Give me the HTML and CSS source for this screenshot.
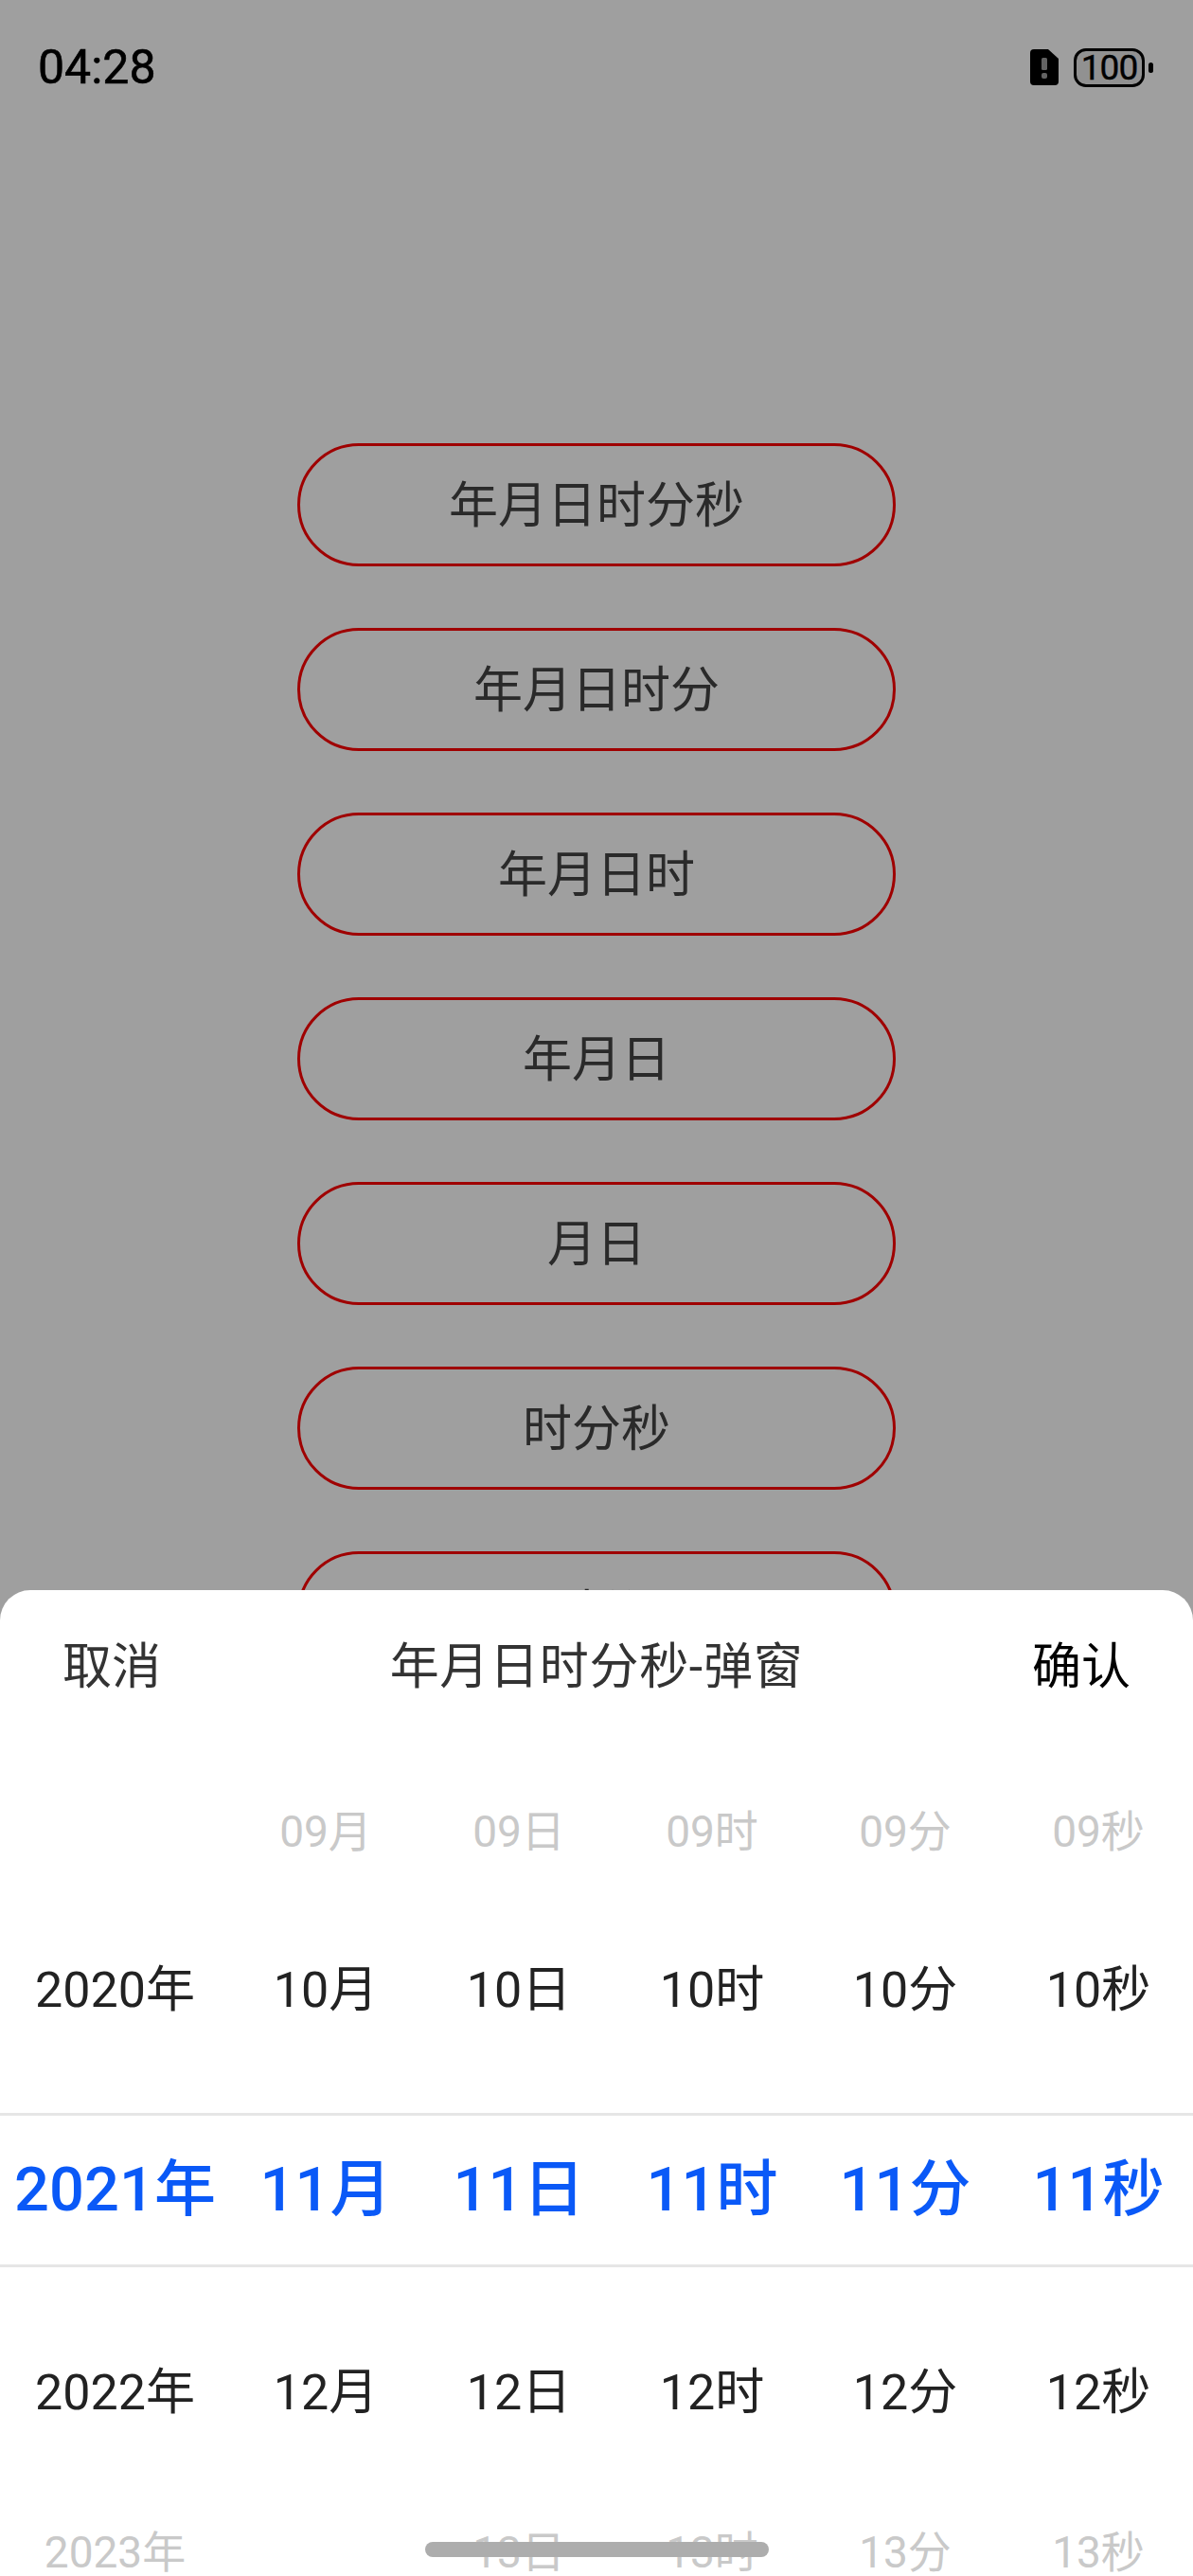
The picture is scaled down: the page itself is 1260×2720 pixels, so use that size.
FILE: index.html
```html
<!DOCTYPE html>
<html lang="zh-CN">
<head>
  <meta charset="UTF-8">
  <title>日期选择弹窗</title>
  <link rel="stylesheet" href="styles.css">
</head>
<body>

  <div class="page">
    <div class="status">
      <span class="time">04:28</span>
      <div class="status-icons">
        <svg class="sim" viewBox="0 0 30 38">
          <path d="M4 0H19L30 10V34A4 4 0 0 1 26 38H4A4 4 0 0 1 0 34V4A4 4 0 0 1 4 0Z" fill="#000"/>
          <rect x="12" y="9" width="6" height="13" rx="1.5" fill="#9f9f9f"/>
          <rect x="12" y="25" width="6" height="6" rx="2" fill="#9f9f9f"/>
        </svg>
        <div class="battery"><span>100</span></div>
        <div class="battery-tip"></div>
      </div>
    </div>

    <div class="btn-list">
      <button class="btn">年月日时分秒</button>
      <button class="btn">年月日时分</button>
      <button class="btn">年月日时</button>
      <button class="btn">年月日</button>
      <button class="btn">月日</button>
      <button class="btn">时分秒</button>
      <button class="btn">时分</button>
    </div>
  </div>

  <div class="mask"></div>

  <div class="sheet">
    <div class="sheet-head">
      <span class="cancel">取消</span>
      <span class="title">年月日时分秒-弹窗</span>
      <span class="confirm">确认</span>
    </div>

    <div class="wheel">
      <div class="row far">
        <span></span><span>09月</span><span>09日</span><span>09时</span><span>09分</span><span>09秒</span>
      </div>
      <div class="row near">
        <span>2020年</span><span>10月</span><span>10日</span><span>10时</span><span>10分</span><span>10秒</span>
      </div>
      <div class="row active">
        <span>2021年</span><span>11月</span><span>11日</span><span>11时</span><span>11分</span><span>11秒</span>
      </div>
      <div class="row near">
        <span>2022年</span><span>12月</span><span>12日</span><span>12时</span><span>12分</span><span>12秒</span>
      </div>
      <div class="row far">
        <span>2023年</span><span></span><span>13日</span><span>13时</span><span>13分</span><span>13秒</span>
      </div>
    </div>

    <div class="home-bar"></div>
  </div>

</body>
</html>
```

FILE: styles.css
```css
html, body { margin: 0; height: 2720px; overflow: hidden; }
body { position: relative; background: #fff; font-family: Roboto, "Noto Sans CJK SC", sans-serif; }

.status { display: flex; justify-content: space-between; align-items: center; height: 142px; padding: 0 42px 0 40px; }
.time { font-size: 50px; color: #000; -webkit-text-stroke: 0.6px #000; }
.status-icons { display: flex; align-items: center; }
.sim { width: 30px; height: 38px; margin-right: 16px; }
.battery { box-sizing: border-box; width: 75px; height: 41px; border: 3px solid #000; border-radius: 13px; background: #e8e8e8; display: flex; align-items: center; justify-content: center; }
.battery span { font-size: 37px; line-height: 1; letter-spacing: -1px; color: #000; -webkit-text-stroke: 0.4px #000; }
.battery-tip { width: 5px; height: 11px; margin-left: 4px; background: #000; border-radius: 3px; }

.btn-list { display: flex; flex-direction: column; align-items: center; gap: 65px; padding-top: 326px; }
.btn { box-sizing: border-box; width: 632px; height: 130px; border: 3px solid #f00; border-radius: 65px; background: none; padding: 0 0 8px; font-family: inherit; font-size: 52px; color: #444; }

.mask { position: absolute; top: 0; left: 0; right: 0; bottom: 0; background: rgba(0, 0, 0, 0.376); }

.sheet { position: absolute; left: 0; right: 0; bottom: 0; height: 1041px; background: #fff; border-radius: 32px 32px 0 0; overflow: hidden; }
.sheet-head { box-sizing: border-box; display: flex; justify-content: space-between; align-items: center; height: 158px; padding: 0 66px 5px; font-size: 52px; }
.cancel, .title { color: #333; }
.title { letter-spacing: 0.7px; }
.confirm { color: #000; }

.wheel { margin-top: 58px; }
.row { box-sizing: border-box; display: grid; grid-template-columns: 241px repeat(5, 204px); align-items: center; text-align: center; line-height: 1; }
.far { height: 74px; padding: 3px 0 0 1px; font-size: 46px; color: #c9c9c9; }
.near { height: 262px; padding: 4px 0 0 1px; font-size: 52px; color: #222; }
.active { height: 163px; padding-left: 1px; font-size: 65px; font-weight: 500; color: #0a59f7; border-top: 3px solid #e6e6e6; border-bottom: 3px solid #e6e6e6; }

.home-bar { position: absolute; left: 449px; bottom: 20px; width: 363px; height: 16px; border-radius: 8px; background: #adadad; }
```
